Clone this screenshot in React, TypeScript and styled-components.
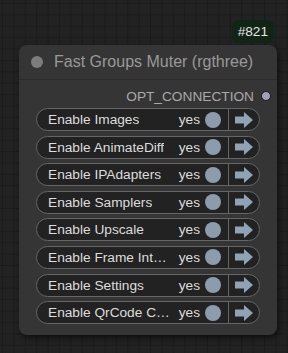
import React from 'react'
import styled, { createGlobalStyle } from 'styled-components'

const GlobalStyle = createGlobalStyle`
  html, body {
    margin: 0;
    padding: 0;
    background: #222;
  }
  body {
    font-family: "Liberation Sans", Arial, sans-serif;
  }
`

const Canvas = styled.div`
  width: 288px;
  height: 353px;
  overflow: hidden;
  box-sizing: border-box;
  padding: 20px 11px 0 19px;
  background-color: #222;
  background-image:
    linear-gradient(to right, #1b1b1b 1px, transparent 1px),
    linear-gradient(to bottom, #1b1b1b 1px, transparent 1px);
  background-size: 11.4px 11.4px;
  background-position: 2px 3px;
`

const BadgeRow = styled.div`
  display: flex;
  justify-content: flex-end;
  padding-right: 3px;
  margin-bottom: 2px;
`

const Badge = styled.div`
  height: 23px;
  padding: 0 6px;
  display: flex;
  align-items: center;
  background: #112516;
  color: #e6e6e6;
  border-radius: 6px;
  font-size: 13.6px;
`

const Node = styled.div`
  width: 258px;
  height: 290px;
  background: #353535;
  border-radius: 8px;
  box-shadow: 2px 3px 6px rgba(0, 0, 0, 0.55);
  display: flex;
  flex-direction: column;
`

const Title = styled.div`
  height: 34px;
  display: flex;
  align-items: center;
  padding-left: 12px;
  gap: 11px;
  border-bottom: 1px solid #2c2c2c;
  color: #999;
  font-size: 16px;
`

const TitleDot = styled.span`
  width: 12px;
  height: 12px;
  border-radius: 50%;
  background: #7d7d7d;
`

const Output = styled.div`
  height: 28px;
  box-sizing: border-box;
  padding: 4px 6px 0 0;
  display: flex;
  align-items: center;
  justify-content: flex-end;
  gap: 7px;
  color: #aaa;
  font-size: 13.7px;
`

const OutputDot = styled.span`
  width: 8px;
  height: 8px;
  border-radius: 50%;
  background: #a0a0b8;
  border: 1px solid #1a1a1a;
`

const Rows = styled.div`
  display: flex;
  flex-direction: column;
  gap: 4.6px;
  padding: 0 17px;
`

const Row = styled.div`
  height: 23px;
  box-sizing: border-box;
  display: flex;
  align-items: center;
  background: #222;
  border: 1px solid #666;
  border-radius: 12px;
  color: #ddd;
  font-size: 13.7px;
`

const Label = styled.span`
  margin-left: 11px;
  max-width: 124px;
  white-space: nowrap;
  overflow: hidden;
  text-overflow: ellipsis;
`

const Value = styled.span`
  margin-left: auto;
`

const Toggle = styled.span`
  width: 16px;
  height: 16px;
  border-radius: 50%;
  background: #8c9cad;
  margin: 0 7px 0 5px;
`

const Divider = styled.span`
  align-self: stretch;
  width: 1px;
  background: #666;
`

const ArrowBox = styled.span`
  width: 30px;
  display: flex;
  align-items: center;
  justify-content: center;
`

const Arrow = () => (
  <svg width="18" height="16" viewBox="0 0 18 16">
    <rect x="0" y="4.5" width="9.5" height="7" fill="#8fa2b6" />
    <polygon points="9,0 18,8 9,16" fill="#8fa2b6" />
  </svg>
)

// labels as the node draws them (long names already cut to fit)
const groups = [
  'Enable Images',
  'Enable AnimateDiff',
  'Enable IPAdapters',
  'Enable Samplers',
  'Enable Upscale',
  'Enable Frame Int…',
  'Enable Settings',
  'Enable QrCode C…',
]

const App: React.FC = () => {
  return (
    <>
      <GlobalStyle />
      <Canvas>
        <BadgeRow>
          <Badge>#821</Badge>
        </BadgeRow>
        <Node>
          <Title>
            <TitleDot />
            <span>Fast Groups Muter (rgthree)</span>
          </Title>
          <Output>
            <span>OPT_CONNECTION</span>
            <OutputDot />
          </Output>
          <Rows>
            {groups.map((g) => (
              <Row key={g}>
                <Label>{g}</Label>
                <Value>yes</Value>
                <Toggle />
                <Divider />
                <ArrowBox>
                  <Arrow />
                </ArrowBox>
              </Row>
            ))}
          </Rows>
        </Node>
      </Canvas>
    </>
  )
}

export default App
